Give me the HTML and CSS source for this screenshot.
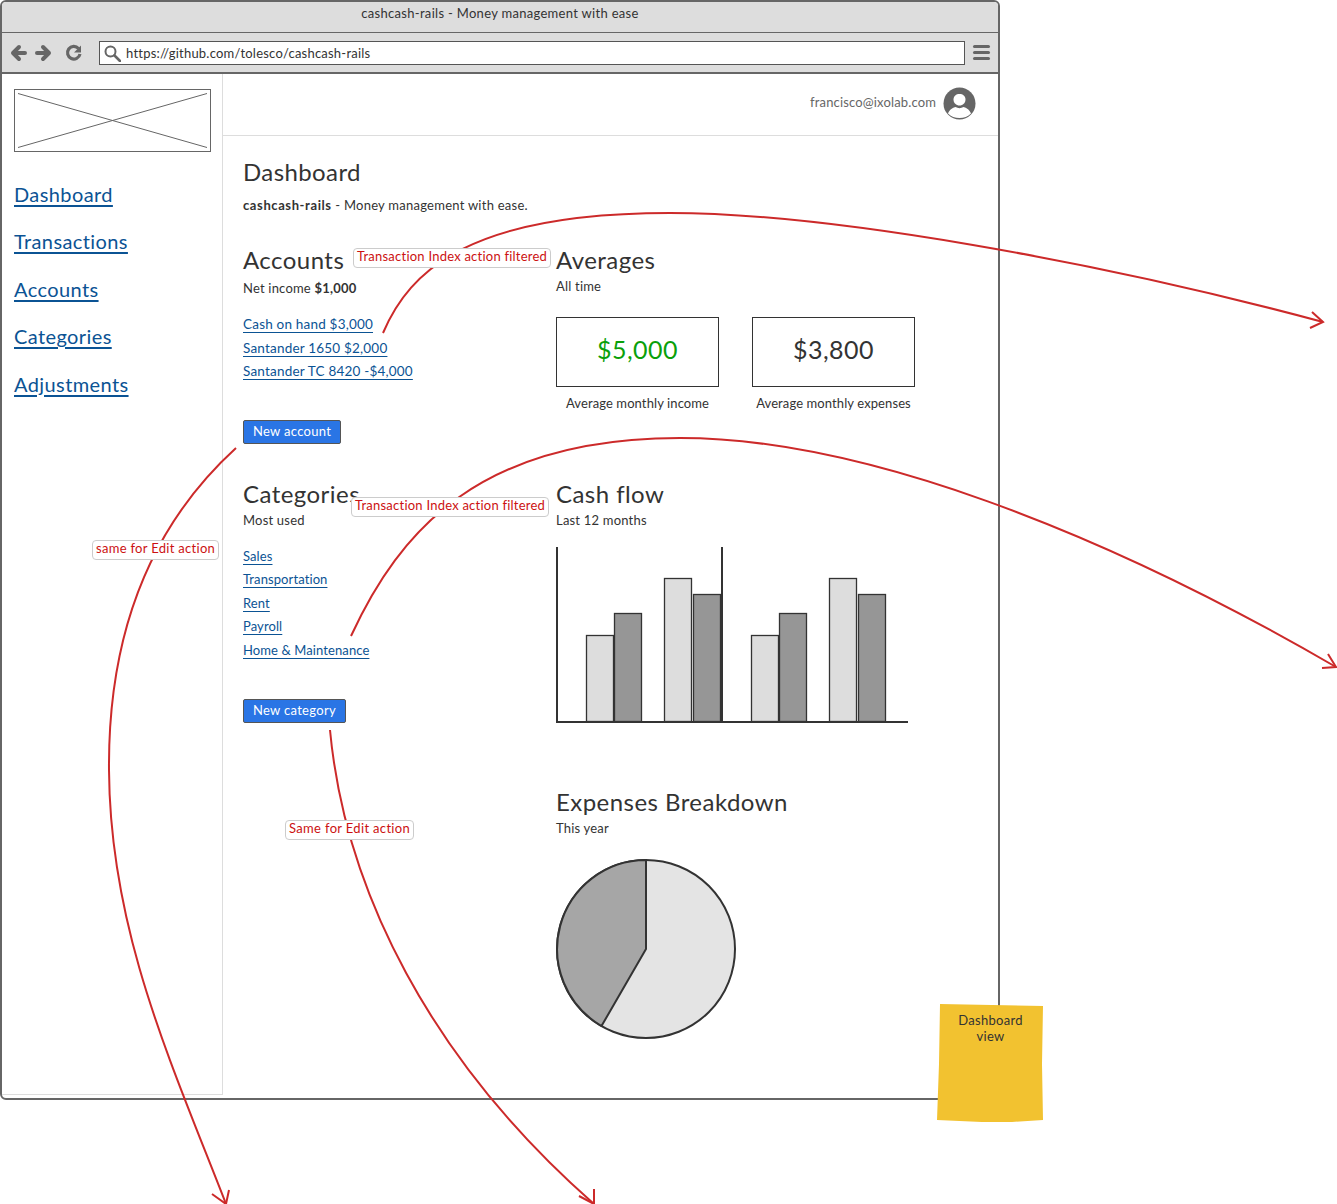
FILE: index.html
```html
<!DOCTYPE html>
<html lang="en">
<head>
    <meta charset="UTF-8">
    <meta name="viewport" content="width=device-width, initial-scale=1.0">
    <title>cashcash-rails - Money management with ease</title>
    <link rel="stylesheet" href="styles.css">
</head>
<body>
    <div class="canvas">
        <div class="window">
            <div class="titlebar">cashcash-rails - Money management with ease</div>
            <div class="toolbar">
                <svg class="nav-icons" width="78" height="20" viewBox="0 0 78 20">
                    <path d="M3 10H15M9 4L3 10L9 16" fill="none" stroke="#666" stroke-width="4" stroke-linecap="round" stroke-linejoin="round"/>
                    <path d="M39 10H27M33 4L39 10L33 16" fill="none" stroke="#666" stroke-width="4" stroke-linecap="round" stroke-linejoin="round"/>
                    <path d="M68.500 5.500A6.300 6.300 0 1 0 70 11" fill="none" stroke="#666" stroke-width="3.200"/>
                    <path d="M71 2.500V9.500H64z" fill="#666"/>
                </svg>
                <div class="urlbar">
                    <svg width="17" height="17" viewBox="0 0 17 17">
                        <circle cx="6.500" cy="6.500" r="5" fill="none" stroke="#666" stroke-width="2"/>
                        <path d="M10.500 10.500L16 16" stroke="#666" stroke-width="2.600" stroke-linecap="round"/>
                    </svg>
                    <span>https://github.com/tolesco/cashcash-rails</span>
                </div>
                <div class="burger"><i></i><i></i><i></i></div>
            </div>
            <div class="app">
                <aside class="sidebar">
                    <svg class="logo" width="197" height="63" viewBox="0 0 197 63">
                        <rect x="0.500" y="0.500" width="196" height="62" fill="#fff" stroke="#666"/>
                        <path d="M4 4.500L193 58.500M4 58.500L193 4.500" stroke="#666" stroke-width="1"/>
                    </svg>
                    <nav class="sidenav">
                        <a href="#">Dashboard</a>
                        <a href="#">Transactions</a>
                        <a href="#">Accounts</a>
                        <a href="#">Categories</a>
                        <a href="#">Adjustments</a>
                    </nav>
                </aside>
                <main class="content">
                    <header class="userbar">
                        <span>francisco@ixolab.com</span>
                        <svg width="33" height="33" viewBox="0 0 33 33">
                            <circle cx="16.500" cy="16.500" r="16" fill="#666"/>
                            <path d="M5 26.500c1.500-4.500 6-6 7.500-6.500 2.500 1.500 5.500 1.500 8 0 1.500.5 6 2 7.500 6.500-3 3-7 4.500-11.500 4.500s-8.500-1.500-11.500-4.500z" fill="#fff"/>
                            <path d="M10.500 12.500c0-3.500 2.700-5.500 6-5.500s6 2 6 5.500-2.700 6-6 6-6-2.500-6-6z" fill="#fff"/>
                        </svg>
                    </header>
                    <div class="page">
                        <h1>Dashboard</h1>
                        <p class="lead"><b>cashcash-rails</b> - Money management with ease.</p>
                        <div class="columns">
                            <div class="col-left">
                                <section class="block-accounts">
                                    <h2>Accounts</h2>
                                    <p class="sub">Net income <b>$1,000</b></p>
                                    <ul class="links">
                                        <li><a href="#">Cash on hand $3,000</a></li>
                                        <li><a href="#">Santander 1650 $2,000</a></li>
                                        <li><a href="#">Santander TC 8420 -$4,000</a></li>
                                    </ul>
                                    <a class="btn" href="#">New account</a>
                                </section>
                                <section class="block-categories">
                                    <h2>Categories</h2>
                                    <p class="sub">Most used</p>
                                    <ul class="links small">
                                        <li><a href="#">Sales</a></li>
                                        <li><a href="#">Transportation</a></li>
                                        <li><a href="#">Rent</a></li>
                                        <li><a href="#">Payroll</a></li>
                                        <li><a href="#">Home &amp; Maintenance</a></li>
                                    </ul>
                                    <a class="btn" href="#">New category</a>
                                </section>
                            </div>
                            <div class="col-right">
                                <section class="block-averages">
                                    <h2>Averages</h2>
                                    <p class="sub">All time</p>
                                    <div class="stats">
                                        <div class="stat">
                                            <div class="stat-box income">$5,000</div>
                                            <div class="stat-label">Average monthly income</div>
                                        </div>
                                        <div class="stat">
                                            <div class="stat-box">$3,800</div>
                                            <div class="stat-label">Average monthly expenses</div>
                                        </div>
                                    </div>
                                </section>
                                <section class="block-flow">
                                    <h2>Cash flow</h2>
                                    <p class="sub">Last 12 months</p>
                                    <svg class="bars" width="353" height="177" viewBox="0 0 353 177">
                                        <g stroke="#333" stroke-width="1.300">
                                            <rect x="30.500" y="89.500" width="27" height="86" fill="#ddd"/>
                                            <rect x="58.500" y="67.500" width="27" height="108" fill="#969696"/>
                                            <rect x="108.500" y="32.500" width="27" height="143" fill="#ddd"/>
                                            <rect x="137.500" y="48.500" width="27" height="127" fill="#969696"/>
                                            <rect x="195.500" y="89.500" width="27" height="86" fill="#ddd"/>
                                            <rect x="223.500" y="67.500" width="27" height="108" fill="#969696"/>
                                            <rect x="273.500" y="32.500" width="27" height="143" fill="#ddd"/>
                                            <rect x="302.500" y="48.500" width="27" height="127" fill="#969696"/>
                                        </g>
                                        <path d="M1 1V176M166 1V176M0 176H352" fill="none" stroke="#333" stroke-width="2"/>
                                    </svg>
                                </section>
                                <section class="block-expenses">
                                    <h2>Expenses Breakdown</h2>
                                    <p class="sub">This year</p>
                                    <svg class="pie" width="181" height="181" viewBox="0 0 181 181">
                                        <circle cx="90" cy="90" r="89" fill="#e4e4e4" stroke="#333" stroke-width="2"/>
                                        <path d="M90 1V90L45.500 167A89 89 0 0 1 90 1z" fill="#a6a6a6" stroke="#333" stroke-width="2" stroke-linejoin="round"/>
                                    </svg>
                                </section>
                            </div>
                        </div>
                    </div>
                </main>
            </div>
        </div>

        <!-- annotations over the wireframe -->
        <svg class="arrows" width="1337" height="1204" viewBox="0 0 1337 1204">
            <g fill="none" stroke="#cc2a2a" stroke-width="2">
                <path d="M383 333C410 270 470 213 670 213C830 213 1100 262 1323 322"/>
                <path d="M1312 312L1323 322L1310 328"/>
                <path d="M351 636C400 530 480 438 680 438C860 438 1100 530 1336 667"/>
                <path d="M1328 654L1336 667L1322 668"/>
                <path d="M236 448C146 530 108 640 109 770C110 930 170 1060 226 1204"/>
                <path d="M212 1194L226 1204L229 1190"/>
                <path d="M330 730C345 890 430 1060 594 1204"/>
                <path d="M579 1196L594 1204L594 1189"/>
            </g>
        </svg>
        <div class="note note-accounts">Transaction Index action filtered</div>
        <div class="note note-categories">Transaction Index action filtered</div>
        <div class="note note-edit">same for Edit action</div>
        <div class="note note-edit2">Same for Edit action</div>
        <div class="sticky">Dashboard<br>view</div>
    </div>
</body>
</html>
```

FILE: styles.css
```css
* {
    box-sizing: border-box;
}
html, body {
    margin: 0;
    padding: 0;
}
body {
    font-family: Lato, "Open Sans", sans-serif;
    color: #333;
    background-color: #fff;
    overflow: hidden;
}
.canvas {
    position: relative;
    width: 1337px;
    height: 1204px;
}
.window {
    width: 1000px;
    height: 1100px;
    border: 2px solid #666;
    border-radius: 6px;
    overflow: hidden;
    display: flex;
    flex-direction: column;
}
.titlebar {
    height: 31px;
    background-color: #ddd;
    border-bottom: 1px solid #666;
    text-align: center;
    font-size: 13px;
    line-height: 23px;
    letter-spacing: 0.3px;
}
.toolbar {
    height: 41px;
    background-color: #ddd;
    border-bottom: 2px solid #666;
    display: flex;
    align-items: center;
    padding: 0 0 0 8px;
    flex: none;
}
.nav-icons {
    flex: none;
    margin-right: 11px;
}
.urlbar {
    width: 866px;
    height: 24px;
    background-color: #fff;
    border: 1px solid #555;
    display: flex;
    align-items: center;
    gap: 5px;
    padding-left: 4px;
    font-size: 13px;
    letter-spacing: 0.22px;
    margin-top: 1px;
}
.burger {
    margin-left: 8px;
    width: 17px;
    display: flex;
    flex-direction: column;
    gap: 2.500px;
}
.burger i {
    display: block;
    height: 3.500px;
    background-color: #666;
    border-radius: 2px;
}
.app {
    flex: 1;
    display: flex;
    padding-bottom: 3px;
}
.sidebar {
    width: 221px;
    border-right: 1px solid #ddd;
    border-bottom: 1px solid #ddd;
    padding: 15px 0 0 12px;
}
.logo {
    display: block;
}
.sidenav {
    display: flex;
    flex-direction: column;
    align-items: flex-start;
    margin-top: 28.600px;
    gap: 21.500px;
}
.sidenav a {
    font-size: 20px;
    line-height: 26px;
    letter-spacing: 0.4px;
}
a {
    color: #0b5394;
    text-underline-offset: 3px;
}
.content {
    flex: 1;
}
.userbar {
    height: 62px;
    border-bottom: 1px solid #ddd;
    display: flex;
    align-items: center;
    justify-content: flex-end;
    padding: 0 22px 2px 0;
    gap: 7px;
    font-size: 13px;
    letter-spacing: 0.15px;
    color: #666;
}
.userbar span {
    margin-bottom: 4px;
}
.page {
    padding: 0 0 0 20px;
}
h1 {
    font-size: 24px;
    font-weight: 400;
    line-height: 30px;
    margin: 21px 0 0;
    letter-spacing: 0.4px;
}
.lead {
    font-size: 13px;
    line-height: 18px;
    margin: 9px 0 0;
    letter-spacing: 0.25px;
}
.lead b {
    letter-spacing: 0.6px;
}
.columns {
    display: flex;
    margin-top: 31px;
}
.col-left {
    width: 313px;
}
h2 {
    font-size: 24px;
    font-weight: 400;
    line-height: 30px;
    margin: 0;
    letter-spacing: 0.45px;
}
.sub {
    font-size: 13px;
    line-height: 18px;
    margin: 2px 0 0;
    letter-spacing: 0.2px;
}
.block-accounts .sub {
    margin-top: 4px;
}
.links {
    list-style: none;
    margin: 16px 0 0;
    padding: 0;
    font-size: 13.500px;
    line-height: 23.500px;
    letter-spacing: 0.2px;
}
.links.small {
    font-size: 13px;
    letter-spacing: 0.1px;
}
.btn {
    display: inline-block;
    height: 24px;
    line-height: 21px;
    padding: 0 9px;
    background-color: #2a75e5;
    border: 1px solid #555;
    border-radius: 2px;
    color: #fff;
    font-size: 13px;
    letter-spacing: 0.3px;
    text-decoration: none;
}
.block-accounts .links {
    margin-bottom: 36px;
}
.block-categories {
    margin-top: 35px;
}
.block-categories .links {
    margin-bottom: 37px;
}
.stats {
    display: flex;
    gap: 33px;
    margin-top: 22px;
}
.stat {
    width: 163px;
    text-align: center;
}
.stat-box {
    height: 70px;
    border: 1px solid #333;
    font-size: 25px;
    line-height: 62px;
    letter-spacing: 0.5px;
}
.stat-box.income {
    color: #0aa00a;
}
.stat-label {
    font-size: 13px;
    line-height: 18px;
    margin-top: 7px;
    white-space: nowrap;
    letter-spacing: 0.1px;
}
.block-flow {
    margin-top: 67px;
}
.bars {
    display: block;
    margin-top: 17px;
}
.block-expenses {
    margin-top: 64px;
}
.pie {
    display: block;
    margin-top: 22px;
}
.arrows {
    position: absolute;
    left: 0;
    top: 0;
}
.note {
    position: absolute;
    height: 20px;
    line-height: 15px;
    padding: 0 3px;
    background-color: #fff;
    border: 1px solid #ccc;
    border-radius: 4px;
    color: #cc1111;
    font-size: 13px;
    letter-spacing: 0.23px;
    white-space: nowrap;
}
.note-accounts {
    left: 353px;
    top: 248px;
}
.note-categories {
    left: 351px;
    top: 497px;
}
.note-edit {
    left: 92px;
    top: 540px;
    letter-spacing: 0.3px;
}
.note-edit2 {
    left: 285px;
    top: 820px;
    letter-spacing: 0.33px;
}
.sticky {
    position: absolute;
    left: 937px;
    top: 1004px;
    width: 107px;
    height: 119px;
    padding-top: 8px;
    background-color: #f2c230;
    clip-path: polygon(3px 0, 106px 2px, 105px 60px, 106px 116px, 75px 118px, 45px 118px, 0 116px, 2px 60px);
    text-align: center;
    font-size: 13px;
    line-height: 16px;
    letter-spacing: 0.3px;
}
```
